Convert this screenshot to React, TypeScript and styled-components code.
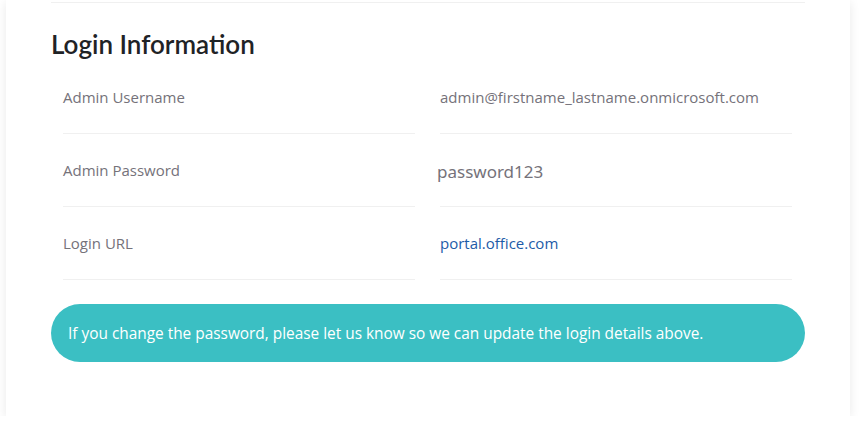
import React from "react";
import styled, { createGlobalStyle } from "styled-components";

const GlobalStyle = createGlobalStyle`
  html, body {
    margin: 0;
    padding: 0;
    background: #ffffff;
  }
  body {
    font-family: "Open Sans", "Noto Sans", sans-serif;
  }
`;

type Row = {
  label: string;
  value: string;
  kind?: "text" | "secret" | "link";
};

const rows: Row[] = [
  { label: "Admin Username", value: "admin@firstname_lastname.onmicrosoft.com" },
  { label: "Admin Password", value: "password123", kind: "secret" },
  { label: "Login URL", value: "portal.office.com", kind: "link" },
];

function App() {
  return (
    <>
      <GlobalStyle />
      <Card>
        <TopRule />
        <SectionTitle>Login Information</SectionTitle>
        <InfoGrid>
          {rows.map((row) => (
            <React.Fragment key={row.label}>
              <Cell>
                <Label>{row.label}</Label>
              </Cell>
              <Cell>
                {row.kind === "link" ? (
                  <ValueLink href="#">{row.value}</ValueLink>
                ) : (
                  <Value $secret={row.kind === "secret"}>{row.value}</Value>
                )}
              </Cell>
            </React.Fragment>
          ))}
        </InfoGrid>
        <Notice>
          If you change the password, please let us know so we can update the
          login details above.
        </Notice>
      </Card>
    </>
  );
}

export default App;

const Card = styled.div`
  margin: 0 11px 0 6px;
  padding: 2px 45px 54px;
  background: #fff;
  box-shadow: 0 2px 10px rgba(0, 0, 0, 0.09);
`;

const TopRule = styled.div`
  height: 1px;
  background: #f0f0f0;
`;

const SectionTitle = styled.h2`
  margin: 26px 0 0 0;
  font-family: "Lato", "Noto Sans", sans-serif;
  font-size: 26px;
  line-height: 30px;
  font-weight: 600;
  color: #1f2326;
`;

const InfoGrid = styled.div`
  display: grid;
  grid-template-columns: 1fr 1fr;
  column-gap: 25px;
  margin-top: 2px;
  padding: 0 13px 0 12px;
`;

const Cell = styled.div`
  display: flex;
  align-items: center;
  height: 72px;
  border-bottom: 1px solid #f0f0f0;
`;

const Label = styled.span`
  font-size: 15px;
  color: #75727a;
`;

const Value = styled.span<{ $secret?: boolean }>`
  font-size: ${(p) => (p.$secret ? "17px" : "15px")};
  font-family: ${(p) =>
    p.$secret ? '"Noto Sans", "Open Sans", sans-serif' : "inherit"};
  margin-left: ${(p) => (p.$secret ? "-3px" : "0")};
  padding-top: ${(p) => (p.$secret ? "3px" : "0")};
  color: #75727a;
`;

const ValueLink = styled.a`
  font-size: 15px;
  color: #1d5ba8;
  text-decoration: none;
`;

const Notice = styled.div`
  margin-top: 24px;
  height: 58px;
  display: flex;
  align-items: center;
  padding: 0 17px;
  border-radius: 29px;
  background: #3bbfc3;
  color: #fff;
  font-size: 15.4px;
`;
